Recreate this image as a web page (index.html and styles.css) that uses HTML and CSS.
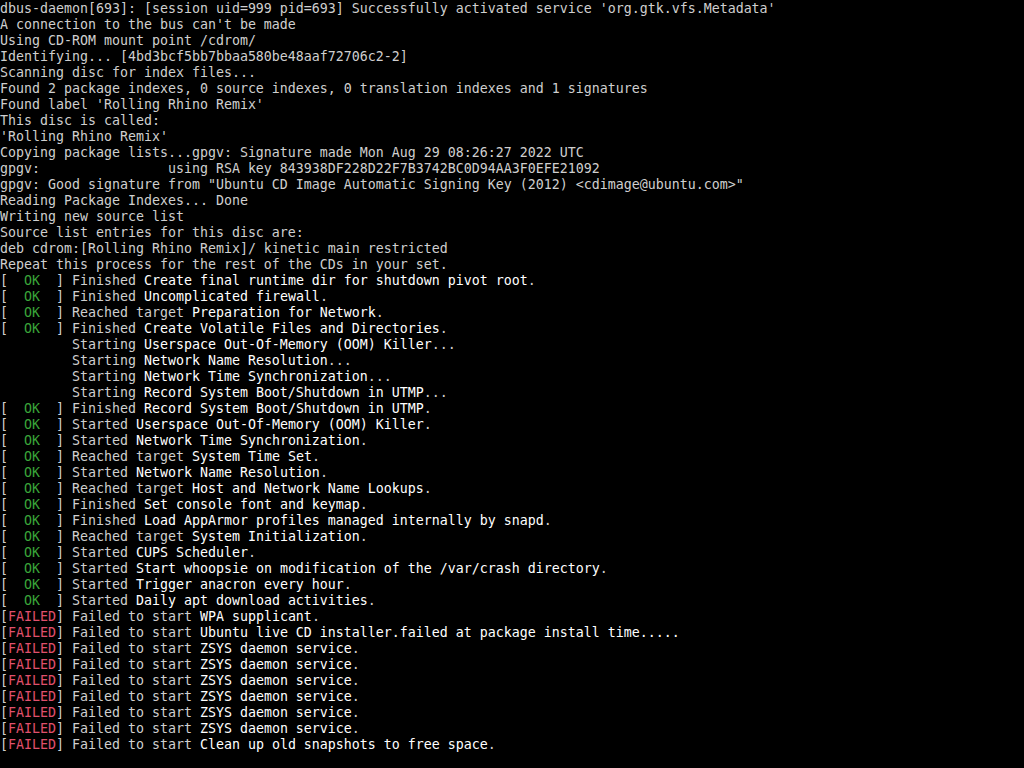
FILE: index.html
```html
<!DOCTYPE html>
<html>
<head>
<meta charset="utf-8">
<link rel="stylesheet" href="styles.css">
</head>
<body>
<pre class="console">dbus-daemon[693]: [session uid=999 pid=693] Successfully activated service 'org.gtk.vfs.Metadata'
A connection to the bus can't be made
Using CD-ROM mount point /cdrom/
Identifying... [4bd3bcf5bb7bbaa580be48aaf72706c2-2]
Scanning disc for index files...
Found 2 package indexes, 0 source indexes, 0 translation indexes and 1 signatures
Found label 'Rolling Rhino Remix'
This disc is called:
'Rolling Rhino Remix'
Copying package lists...gpgv: Signature made Mon Aug 29 08:26:27 2022 UTC
gpgv:                using RSA key 843938DF228D22F7B3742BC0D94AA3F0EFE21092
gpgv: Good signature from "Ubuntu CD Image Automatic Signing Key (2012) &lt;cdimage@ubuntu.com&gt;"
Reading Package Indexes... Done
Writing new source list
Source list entries for this disc are:
deb cdrom:[Rolling Rhino Remix]/ kinetic main restricted
Repeat this process for the rest of the CDs in your set.
[  <span class="ok">OK</span>  ] Finished <span class="hi">Create final runtime dir for shutdown pivot root</span>.
[  <span class="ok">OK</span>  ] Finished <span class="hi">Uncomplicated firewall</span>.
[  <span class="ok">OK</span>  ] Reached target <span class="hi">Preparation for Network</span>.
[  <span class="ok">OK</span>  ] Finished <span class="hi">Create Volatile Files and Directories</span>.
         Starting <span class="hi">Userspace Out-Of-Memory (OOM) Killer</span>...
         Starting <span class="hi">Network Name Resolution</span>...
         Starting <span class="hi">Network Time Synchronization</span>...
         Starting <span class="hi">Record System Boot/Shutdown in UTMP</span>...
[  <span class="ok">OK</span>  ] Finished <span class="hi">Record System Boot/Shutdown in UTMP</span>.
[  <span class="ok">OK</span>  ] Started <span class="hi">Userspace Out-Of-Memory (OOM) Killer</span>.
[  <span class="ok">OK</span>  ] Started <span class="hi">Network Time Synchronization</span>.
[  <span class="ok">OK</span>  ] Reached target <span class="hi">System Time Set</span>.
[  <span class="ok">OK</span>  ] Started <span class="hi">Network Name Resolution</span>.
[  <span class="ok">OK</span>  ] Reached target <span class="hi">Host and Network Name Lookups</span>.
[  <span class="ok">OK</span>  ] Finished <span class="hi">Set console font and keymap</span>.
[  <span class="ok">OK</span>  ] Finished <span class="hi">Load AppArmor profiles managed internally by snapd</span>.
[  <span class="ok">OK</span>  ] Reached target <span class="hi">System Initialization</span>.
[  <span class="ok">OK</span>  ] Started <span class="hi">CUPS Scheduler</span>.
[  <span class="ok">OK</span>  ] Started <span class="hi">Start whoopsie on modification of the /var/crash directory</span>.
[  <span class="ok">OK</span>  ] Started <span class="hi">Trigger anacron every hour</span>.
[  <span class="ok">OK</span>  ] Started <span class="hi">Daily apt download activities</span>.
[<span class="fail">FAILED</span>] Failed to start <span class="hi">WPA supplicant</span>.
[<span class="fail">FAILED</span>] Failed to start <span class="hi">Ubuntu live CD installer.failed at package install time.....</span>
[<span class="fail">FAILED</span>] Failed to start <span class="hi">ZSYS daemon service</span>.
[<span class="fail">FAILED</span>] Failed to start <span class="hi">ZSYS daemon service</span>.
[<span class="fail">FAILED</span>] Failed to start <span class="hi">ZSYS daemon service</span>.
[<span class="fail">FAILED</span>] Failed to start <span class="hi">ZSYS daemon service</span>.
[<span class="fail">FAILED</span>] Failed to start <span class="hi">ZSYS daemon service</span>.
[<span class="fail">FAILED</span>] Failed to start <span class="hi">ZSYS daemon service</span>.
[<span class="fail">FAILED</span>] Failed to start <span class="hi">Clean up old snapshots to free space</span>.</pre>
</body>
</html>
```

FILE: styles.css
```css
html, body {
  margin: 0;
  padding: 0;
  background: #000;
  width: 1024px;
  height: 768px;
  overflow: hidden;
}

.console {
  margin: 0;
  padding: 1px 0 0 0;
  font-family: "DejaVu Sans Mono", "Liberation Mono", monospace;
  font-size: 13.29px;
  line-height: 16px;
  color: #cfcfcf;
  white-space: pre;
}

.hi {
  color: #ffffff;
}

.ok {
  color: #3aa63a;
}

.fail {
  color: #e0506c;
}
```
